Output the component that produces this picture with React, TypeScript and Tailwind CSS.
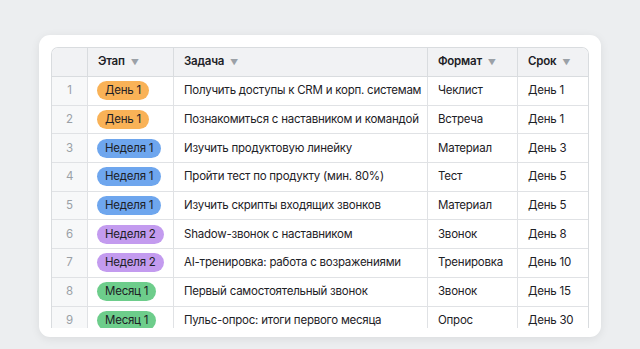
import React from "react";

type Row = {
  stage: string;
  tone: "orange" | "blue" | "purple" | "green";
  task: string;
  format: string;
  due: string;
};

const rows: Row[] = [
  { stage: "День 1", tone: "orange", task: "Получить доступы к CRM и корп. системам", format: "Чеклист", due: "День 1" },
  { stage: "День 1", tone: "orange", task: "Познакомиться с наставником и командой", format: "Встреча", due: "День 1" },
  { stage: "Неделя 1", tone: "blue", task: "Изучить продуктовую линейку", format: "Материал", due: "День 3" },
  { stage: "Неделя 1", tone: "blue", task: "Пройти тест по продукту (мин. 80%)", format: "Тест", due: "День 5" },
  { stage: "Неделя 1", tone: "blue", task: "Изучить скрипты входящих звонков", format: "Материал", due: "День 5" },
  { stage: "Неделя 2", tone: "purple", task: "Shadow-звонок с наставником", format: "Звонок", due: "День 8" },
  { stage: "Неделя 2", tone: "purple", task: "AI-тренировка: работа с возражениями", format: "Тренировка", due: "День 10" },
  { stage: "Месяц 1", tone: "green", task: "Первый самостоятельный звонок", format: "Звонок", due: "День 15" },
  { stage: "Месяц 1", tone: "green", task: "Пульс-опрос: итоги первого месяца", format: "Опрос", due: "День 30" },
];

const toneClass: Record<Row["tone"], string> = {
  orange: "bg-[#f9b257]",
  blue: "bg-[#6ea6ee]",
  purple: "bg-[#c39bef]",
  green: "bg-[#6dcd8b]",
};

const cols = "grid grid-cols-[36px_86px_254px_90px_1fr]";

const HeaderCell: React.FC<{ label: string; last?: boolean }> = ({ label, last }) => (
  <div
    className={
      "flex items-center gap-[6px] px-[10px] font-semibold text-[#1d2126] whitespace-nowrap " +
      (last ? "" : "border-r border-[#d9dcdf]")
    }
  >
    <span>{label}</span>
    <span className="text-[8px] text-[#9ba1a7]">▼</span>
  </div>
);

export default function App() {
  return (
    <div
      className="w-[640px] h-[349px] bg-[#eceef0] pt-[35px] pl-[39px]"
      style={{ fontFamily: "Inter, 'Noto Sans', sans-serif" }}
    >
      <div className="w-[562px] h-[302px] rounded-[11px] bg-white p-3 shadow-[0_2px_10px_rgba(0,0,0,0.08)]">
        <div className="h-[281px] overflow-hidden rounded-t-[7px] border border-b-0 border-[#d9dcdf] text-[11.5px] tracking-[-0.02em] text-[#1d2126]">
          {/* Header */}
          <div className={cols + " h-[29px] bg-[#f1f2f4] border-b border-[#d9dcdf]"}>
            <div className="border-r border-[#d9dcdf]" />
            <HeaderCell label="Этап" />
            <HeaderCell label="Задача" />
            <HeaderCell label="Формат" />
            <HeaderCell label="Срок" last />
          </div>

          {rows.map((r, i) => (
            <div key={i} className={cols + " h-[28.7px] border-b border-[#e0e2e5] whitespace-nowrap"}>
              <div className="flex items-center justify-center border-r border-[#e0e2e5] bg-[#f7f8f9] text-[#9aa0a6]">
                {i + 1}
              </div>
              <div className="flex items-center border-r border-[#e0e2e5] px-[9px]">
                <span className={"rounded-full px-[8px] leading-[19px] " + toneClass[r.tone]}>{r.stage}</span>
              </div>
              <div className="flex items-center border-r border-[#e0e2e5] px-[10px]">{r.task}</div>
              <div className="flex items-center border-r border-[#e0e2e5] px-[10px]">{r.format}</div>
              <div className="flex items-center px-[10px]">{r.due}</div>
            </div>
          ))}
        </div>
      </div>
    </div>
  );
}
